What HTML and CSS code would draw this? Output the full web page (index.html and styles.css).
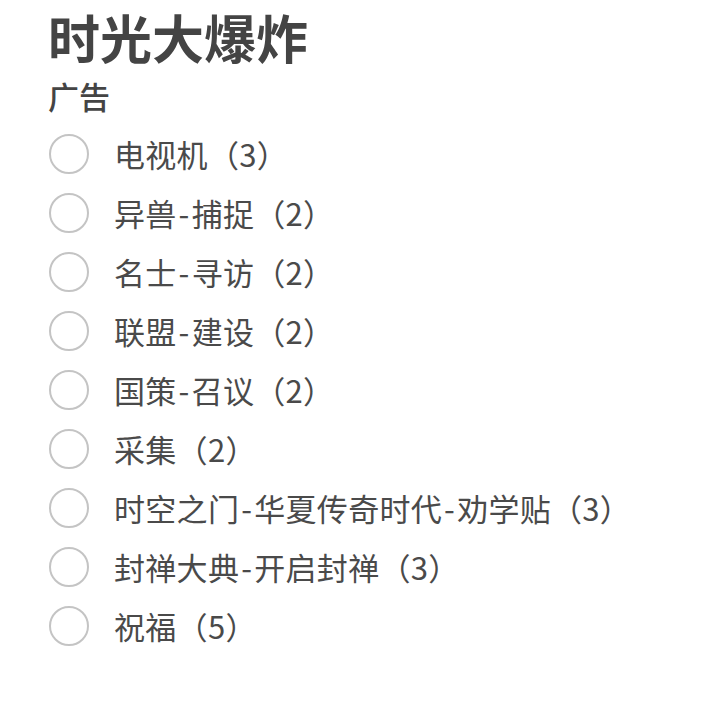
FILE: index.html
```html
<!DOCTYPE html>
<html lang="zh-CN">
<head>
  <meta charset="UTF-8" />
  <meta name="viewport" content="width=device-width, initial-scale=1.0"/>
  <title>时光大爆炸</title>
  <link rel="stylesheet" href="styles.css">
</head>
<body>

  <div class="page">
    <h1>时光大爆炸</h1>
    <h2>广告</h2>

    <ul class="task-list">
      <li class="task"><span class="radio"></span><span class="label">电视机（3）</span></li>
      <li class="task"><span class="radio"></span><span class="label">异兽<span class="sep">-</span>捕捉（2）</span></li>
      <li class="task"><span class="radio"></span><span class="label">名士<span class="sep">-</span>寻访（2）</span></li>
      <li class="task"><span class="radio"></span><span class="label">联盟<span class="sep">-</span>建设（2）</span></li>
      <li class="task"><span class="radio"></span><span class="label">国策<span class="sep">-</span>召议（2）</span></li>
      <li class="task"><span class="radio"></span><span class="label">采集（2）</span></li>
      <li class="task"><span class="radio"></span><span class="label">时空之门<span class="sep">-</span>华夏传奇时代<span class="sep">-</span>劝学贴（3）</span></li>
      <li class="task"><span class="radio"></span><span class="label">封禅大典<span class="sep">-</span>开启封禅（3）</span></li>
      <li class="task"><span class="radio"></span><span class="label">祝福（5）</span></li>
    </ul>
  </div>

</body>
</html>
```

FILE: styles.css
```css
* {
  margin: 0;
  padding: 0;
  box-sizing: border-box;
}

body {
  font-family: "Noto Sans CJK SC", "Noto Sans", sans-serif;
  background: #fff;
  color: #454545;
}

.page {
  padding: 1px 0 0 48px;
}

h1 {
  font-size: 52px;
  font-weight: bold;
  line-height: 72px;
  color: #444;
}

h2 {
  font-size: 31px;
  font-weight: 500;
  line-height: 40px;
  margin-top: 3px;
  color: #444;
}

/* each task row: radio circle + label, fixed row pitch */
.task-list {
  list-style: none;
  margin-top: 8px;
}

.task {
  display: flex;
  align-items: center;
  height: 59px;
}

.radio {
  width: 40px;
  height: 40px;
  border: 2px solid #c4c4c4;
  border-radius: 50%;
  flex-shrink: 0;
  margin-left: 1px;
}

.label {
  margin-left: 25px;
  font-size: 31px;
  line-height: 40px;
  letter-spacing: 0.3px;
  color: #4a4a4a;
}

.sep {
  margin: 0 2px;
}
```
